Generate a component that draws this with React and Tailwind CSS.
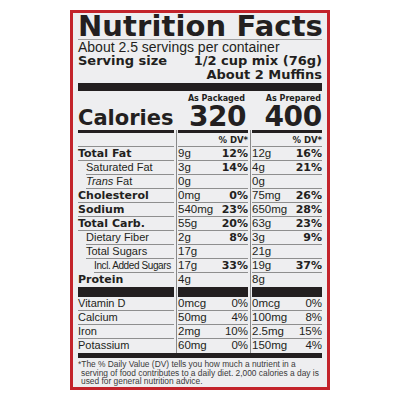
import React from "react";

const HEAVY = "font-['DejaVu_Sans',sans-serif] font-bold";
const REG = "font-['Liberation_Sans',Arial,sans-serif]";
const LINE = "border-b border-[#8e8e8e]";

function Div() {
  return (
    <div className="w-[4px] shrink-0 flex justify-center">
      <div className="w-px h-full bg-[#8a8a8a]" />
    </div>
  );
}

function Row({ label, labelCls, indent = "", a, ap, b, bp, pctCls, noLine = false }) {
  const line = noLine ? "" : LINE;
  return (
    <div className="flex h-[14px] leading-[13px]">
      <div className="w-[96px] shrink-0 flex">
        <div className={`flex-1 ${indent} ${line} ${labelCls} whitespace-nowrap`}>{label}</div>
      </div>
      <Div />
      <div className={`w-[70px] shrink-0 flex justify-between ${line}`}>
        <span className={`${REG} text-[11.5px]`}>{a}</span>
        <span className={pctCls}>{ap}</span>
      </div>
      <Div />
      <div className={`w-[70px] shrink-0 flex justify-between ${line}`}>
        <span className={`${REG} text-[11.5px]`}>{b}</span>
        <span className={pctCls}>{bp}</span>
      </div>
    </div>
  );
}

function SplitBar({ h }) {
  return (
    <div className={`flex ${h}`}>
      <div className="w-[96px] shrink-0 bg-[#231f20]" />
      <Div />
      <div className="w-[70px] shrink-0 bg-[#231f20]" />
      <Div />
      <div className="w-[70px] shrink-0 bg-[#231f20]" />
    </div>
  );
}

const BOLD_LABEL = `${HEAVY} text-[11px]`;
const REG_LABEL = `${REG} text-[11px]`;
const BOLD_PCT = `${HEAVY} text-[11px]`;
const REG_PCT = `${REG} text-[11.5px]`;

export default function App() {
  return (
    <div className="w-[400px] h-[400px] bg-white pt-[10px] pl-[70px]">
      <div className="w-[260px] h-[380px] border-[3px] border-[#c3232b] bg-[#eeeef0] text-[#231f20]">
        <div className="px-[5px]">
          <div className={`${HEAVY} text-[29px] leading-[26px] whitespace-nowrap tracking-[0.1px]`}>
            Nutrition Facts
          </div>
          <div className="h-px bg-[#a0a0a0]" />
          <div className={`${REG} text-[14px] leading-[14px] whitespace-nowrap`}>
            About 2.5 servings per container
          </div>
          <div className={`${HEAVY} text-[13px] leading-[14px] flex justify-between whitespace-nowrap`}>
            <span>Serving size</span>
            <span>1/2 cup mix (76g)</span>
          </div>
          <div className={`${HEAVY} text-[13px] leading-[14px] text-right whitespace-nowrap`}>
            About 2 Muffins
          </div>
          <div className="h-[8px] bg-[#231f20] mt-px" />

          <div className="flex h-[12px] items-end">
            <div className="w-[96px] shrink-0" />
            <Div />
            <div className={`w-[70px] shrink-0 text-right pr-[3px] ${HEAVY} text-[8px] leading-[9px]`}>As Packaged</div>
            <Div />
            <div className={`w-[70px] shrink-0 text-right pr-[1px] ${HEAVY} text-[8px] leading-[9px]`}>As Prepared</div>
          </div>
          <div className="flex h-[27px] items-end">
            <div className={`w-[96px] shrink-0 ${HEAVY} text-[21px] leading-[21px] pb-[1px]`}>Calories</div>
            <Div />
            <div className={`w-[70px] shrink-0 text-right pr-[2px] ${HEAVY} text-[28px] leading-[26px] tracking-[-0.5px]`}>320</div>
            <Div />
            <div className={`w-[70px] shrink-0 text-right ${HEAVY} text-[28px] leading-[26px] tracking-[-0.3px]`}>400</div>
          </div>
          <SplitBar h="h-[3px]" />
          <div className="flex h-[14px]">
            <div className={`w-[96px] shrink-0 ${LINE}`} />
            <Div />
            <div className={`w-[70px] shrink-0 text-right pt-[3px] leading-[9px] ${LINE} ${HEAVY} text-[8.5px]`}>% DV*</div>
            <Div />
            <div className={`w-[70px] shrink-0 text-right pt-[3px] leading-[9px] ${LINE} ${HEAVY} text-[8.5px]`}>% DV*</div>
          </div>

          <Row label="Total Fat" labelCls={BOLD_LABEL} a="9g" ap="12%" b="12g" bp="16%" pctCls={BOLD_PCT} />
          <Row label="Saturated Fat" labelCls={REG_LABEL} indent="ml-[8px]" a="3g" ap="14%" b="4g" bp="21%" pctCls={BOLD_PCT} />
          <Row
            label={<><i>Trans</i> Fat</>}
            labelCls={REG_LABEL}
            indent="ml-[8px]"
            a="0g"
            ap=""
            b="0g"
            bp=""
            pctCls={BOLD_PCT}
          />
          <Row label="Cholesterol" labelCls={BOLD_LABEL} a="0mg" ap="0%" b="75mg" bp="26%" pctCls={BOLD_PCT} />
          <Row label="Sodium" labelCls={BOLD_LABEL} a="540mg" ap="23%" b="650mg" bp="28%" pctCls={BOLD_PCT} />
          <Row label="Total Carb." labelCls={BOLD_LABEL} a="55g" ap="20%" b="63g" bp="23%" pctCls={BOLD_PCT} />
          <Row label="Dietary Fiber" labelCls={REG_LABEL} indent="ml-[8px]" a="2g" ap="8%" b="3g" bp="9%" pctCls={BOLD_PCT} />
          <Row label="Total Sugars" labelCls={REG_LABEL} indent="ml-[8px]" a="17g" ap="" b="21g" bp="" pctCls={BOLD_PCT} />
          <Row
            label="Incl. Added Sugars"
            labelCls={`${REG} text-[10px] tracking-[-0.4px]`}
            indent="ml-[16px]"
            a="17g"
            ap="33%"
            b="19g"
            bp="37%"
            pctCls={BOLD_PCT}
          />
          <Row label="Protein" labelCls={BOLD_LABEL} a="4g" ap="" b="8g" bp="" pctCls={BOLD_PCT} noLine />
          <SplitBar h="h-[10px]" />

          <Row label="Vitamin D" labelCls={REG_LABEL} a="0mcg" ap="0%" b="0mcg" bp="0%" pctCls={REG_PCT} />
          <Row label="Calcium" labelCls={REG_LABEL} a="50mg" ap="4%" b="100mg" bp="8%" pctCls={REG_PCT} />
          <Row label="Iron" labelCls={REG_LABEL} a="2mg" ap="10%" b="2.5mg" bp="15%" pctCls={REG_PCT} />
          <Row label="Potassium" labelCls={REG_LABEL} a="60mg" ap="0%" b="150mg" bp="4%" pctCls={REG_PCT} noLine />
          <div className="h-[5px] bg-[#231f20]" />

          <p className={`${REG} text-[8.4px] leading-[8.6px] text-[#3a3a3a] pl-[3px] indent-[-3px] mt-[2px] whitespace-nowrap`}>
            *The % Daily Value (DV) tells you how much a nutrient in a
            <br />
            serving of food contributes to a daily diet. 2,000 calories a day is
            <br />
            used for general nutrition advice.
          </p>
        </div>
      </div>
    </div>
  );
}
